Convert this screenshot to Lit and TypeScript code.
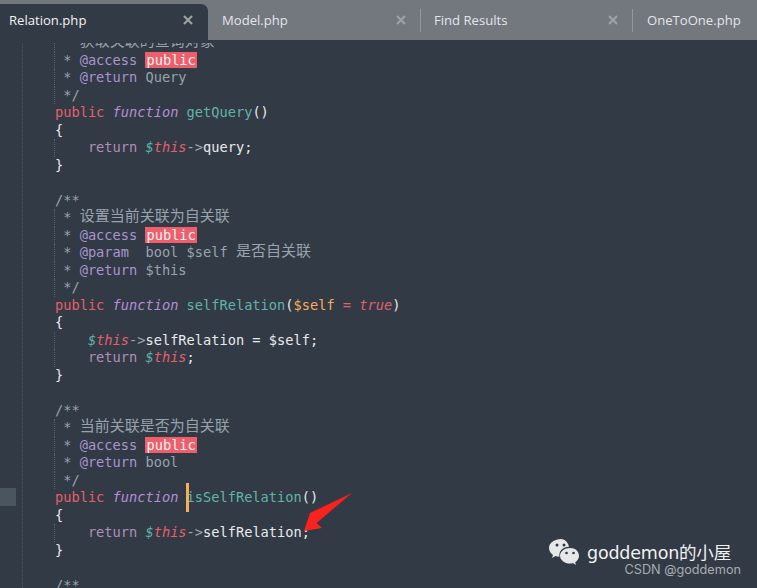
import { LitElement, html, css, svg } from "lit";
import { customElement } from "lit/decorators.js";

type Tok = [string, string];
const C = (t: string): Tok => ["c", t];
const Z = (t: string): Tok => ["c z", t];
const sig = (name: string, rest: Tok[] = [["w", "()"]]): Tok[] => [["k", "public"], ["w", " "], ["f", "function"], ["w", " "], ["n", name], ...rest];

const LINES: { t: Tok[]; g?: boolean }[] = [
  { t: [C("   "), Z("获取关联的查询对象")], g: true },
  { t: [C(" * "), ["a", "@access"], C(" "), ["h", "public"]], g: true },
  { t: [C(" * "), ["a", "@return"], C(" Query")], g: true },
  { t: [C(" */")], g: true },
  { t: sig("getQuery") },
  { t: [["w", "{"]] },
  { t: [["w", "    "], ["r", "return"], ["w", " "], ["d", "$"], ["v", "this"], ["o", "->"], ["w", "query;"]], g: true },
  { t: [["w", "}"]] },
  { t: [] },
  { t: [C("/**")] },
  { t: [C(" * "), Z("设置当前关联为自关联")], g: true },
  { t: [C(" * "), ["a", "@access"], C(" "), ["h", "public"]], g: true },
  { t: [C(" * "), ["a", "@param"], C("  bool $self "), Z("是否自关联")], g: true },
  { t: [C(" * "), ["a", "@return"], C(" $this")], g: true },
  { t: [C(" */")], g: true },
  { t: sig("selfRelation", [["w", "("], ["p", "$self"], ["w", " "], ["k", "="], ["w", " "], ["b", "true"], ["w", ")"]]) },
  { t: [["w", "{"]] },
  { t: [["w", "    "], ["d", "$"], ["v", "this"], ["o", "->"], ["w", "selfRelation = $self;"]], g: true },
  { t: [["w", "    "], ["r", "return"], ["w", " "], ["d", "$"], ["v", "this"], ["w", ";"]], g: true },
  { t: [["w", "}"]] },
  { t: [] },
  { t: [C("/**")] },
  { t: [C(" * "), Z("当前关联是否为自关联")], g: true },
  { t: [C(" * "), ["a", "@access"], C(" "), ["h", "public"]], g: true },
  { t: [C(" * "), ["a", "@return"], C(" bool")], g: true },
  { t: [C(" */")], g: true },
  { t: sig("isSelfRelation") },
  { t: [["w", "{"]] },
  { t: [["w", "    "], ["r", "return"], ["w", " "], ["d", "$"], ["v", "this"], ["o", "->"], ["w", "selfRelation;"]], g: true },
  { t: [["w", "}"]] },
  { t: [] },
  { t: [C("/**")] },
];

const TABS = ["Relation.php", "Model.php", "Find Results", "OneToOne.php"];
const CARET_LINE = 26;

@customElement("app-root")
export class AppRoot extends LitElement {
  static styles = css`
    :host { display: block; width: 757px; height: 588px; overflow: hidden; background: #323a45; position: relative; }
    .tabs { display: flex; height: 40px; padding-top: 4px; box-sizing: border-box; background: #73777e; font: 13.1px "Open Sans", sans-serif; color: #e4e6e8; }
    .tab { flex: 0 0 212px; box-sizing: border-box; display: flex; align-items: center; padding: 0 14px 4px 14px; position: relative; }
    .tab .label { flex: 1; }
    .tab:nth-child(n+3)::before { content: ""; position: absolute; left: 0; top: 5px; bottom: 8px; width: 1px; background: #94979c; }
    .tab:nth-child(4) { padding-left: 15px; }
    .tab.active { flex-basis: 208px; background: #323a45; color: #f2f3f4; border-radius: 0 7px 0 0; padding-left: 9px; padding-right: 15px; }
    .x { width: 10px; height: 10px; display: block; flex: none; }
    .editor { height: 548px; padding-top: 3px; box-sizing: border-box; }
    .clip { height: 545px; overflow: hidden; position: relative; }
    .code { margin-top: -9px; padding-left: 55px; font: 13.66px/17.5px "DejaVu Sans Mono", "Noto Sans CJK SC", monospace; color: #e6e8ea; }
    .clip::before { content: ""; position: absolute; left: 22px; top: 0; bottom: 0; border-left: 1px dotted #4d5560; }
    .line { height: 17.5px; white-space: pre; position: relative; }
    .line.g::before { content: ""; position: absolute; left: -1px; top: 0; bottom: 0; border-left: 1px dotted #5a626d; }
    .c { color: #98a3ad; }
    .z { font-size: 15px; line-height: 15px; vertical-align: 1px; }
    .a { color: #a994cf; }
    .h { background: #ef5f6b; color: #fbf3f3; display: inline-block; height: 16.5px; line-height: 16.5px; vertical-align: top; padding: 0 1px; }
    .k { color: #e4606c; }
    .f { color: #b58fd6; font-style: italic; }
    .n { color: #5fb4a8; }
    .w { color: #e8eaec; }
    .r { color: #b38fb8; }
    .d { color: #5fb4a8; font-style: italic; }
    .v { color: #e4606c; font-style: italic; }
    .o { color: #a0a8b0; }
    .p { color: #f6ae5b; }
    .b { color: #e4606c; font-style: italic; }
    .caret { position: absolute; left: 131px; top: -6px; width: 3px; height: 29px; background: #f8ac5c; }
    .mark { position: absolute; left: 0; top: 488px; width: 16px; height: 18px; background: #4b5560; }
    .arrow { position: absolute; left: 296px; top: 486px; }
    .wm { position: absolute; left: 549px; top: 537px; display: flex; align-items: center; gap: 6px; color: #f0f1f2; font: 17.5px "DejaVu Sans", "Noto Sans CJK SC", sans-serif; letter-spacing: -0.2px; }
    .csdn { position: absolute; right: 16px; top: 562px; font: 12.7px Inter, sans-serif; color: #a8adb2; }
  `;

  private xIcon() {
    return html`<svg class="x" viewBox="0 0 10 10"><path d="M1 1L9 9M9 1L1 9" stroke="#9ea2a7" stroke-width="2.2" fill="none"/></svg>`;
  }

  render() {
    return html`
      <div class="tabs">
        ${TABS.map((t, i) => html`<div class="tab ${i === 0 ? "active" : ""}"><span class="label">${t}</span>${i < 3 ? this.xIcon() : ""}</div>`)}
      </div>
      <div class="editor"><div class="clip"><div class="code">
        ${LINES.map((l, i) => html`<div class="line ${l.g ? "g" : ""}">${l.t.map(([c, t]) => html`<span class="${c}">${t}</span>`)}${i === CARET_LINE ? html`<span class="caret"></span>` : ""}</div>`)}
      </div></div></div>
      <div class="mark"></div>
      <svg class="arrow" width="60" height="50" viewBox="296 486 60 50">
        ${svg`<path d="M352 493L310 513L304 531L322 528L316.500 523Z" fill="#f8231c"/>`}
      </svg>
      <div class="wm">
        <svg width="32" height="28" viewBox="0 0 32 28">
          ${svg`<path d="M12 2C6 2 0 5.500 0 11c0 3 1.700 5.200 4 7l-1 3 3.500-2c1.200.4 2.700.7 4 .7C9.500 15 13 10 20 9.800 19 5 15.500 2 12 2Z" fill="#e6e7e9"/>
          <path d="M21 11c-5.500 0-10 3.500-10 7.800s4.500 7.800 10 7.800c1 0 2-.1 3-.5l3 1.800-.8-2.600c2.300-1.500 3.800-3.900 3.800-6.500 0-4.300-3.500-7.800-9-7.800Z" fill="#e6e7e9"/>
          <circle cx="8" cy="8" r="1.500" fill="#323a45"/><circle cx="15" cy="8" r="1.500" fill="#323a45"/>
          <circle cx="17.500" cy="16" r="1.300" fill="#323a45"/><circle cx="24.500" cy="16" r="1.300" fill="#323a45"/>`}
        </svg>
        <span>goddemon的小屋</span>
      </div>
      <div class="csdn">CSDN @goddemon</div>
    `;
  }
}
